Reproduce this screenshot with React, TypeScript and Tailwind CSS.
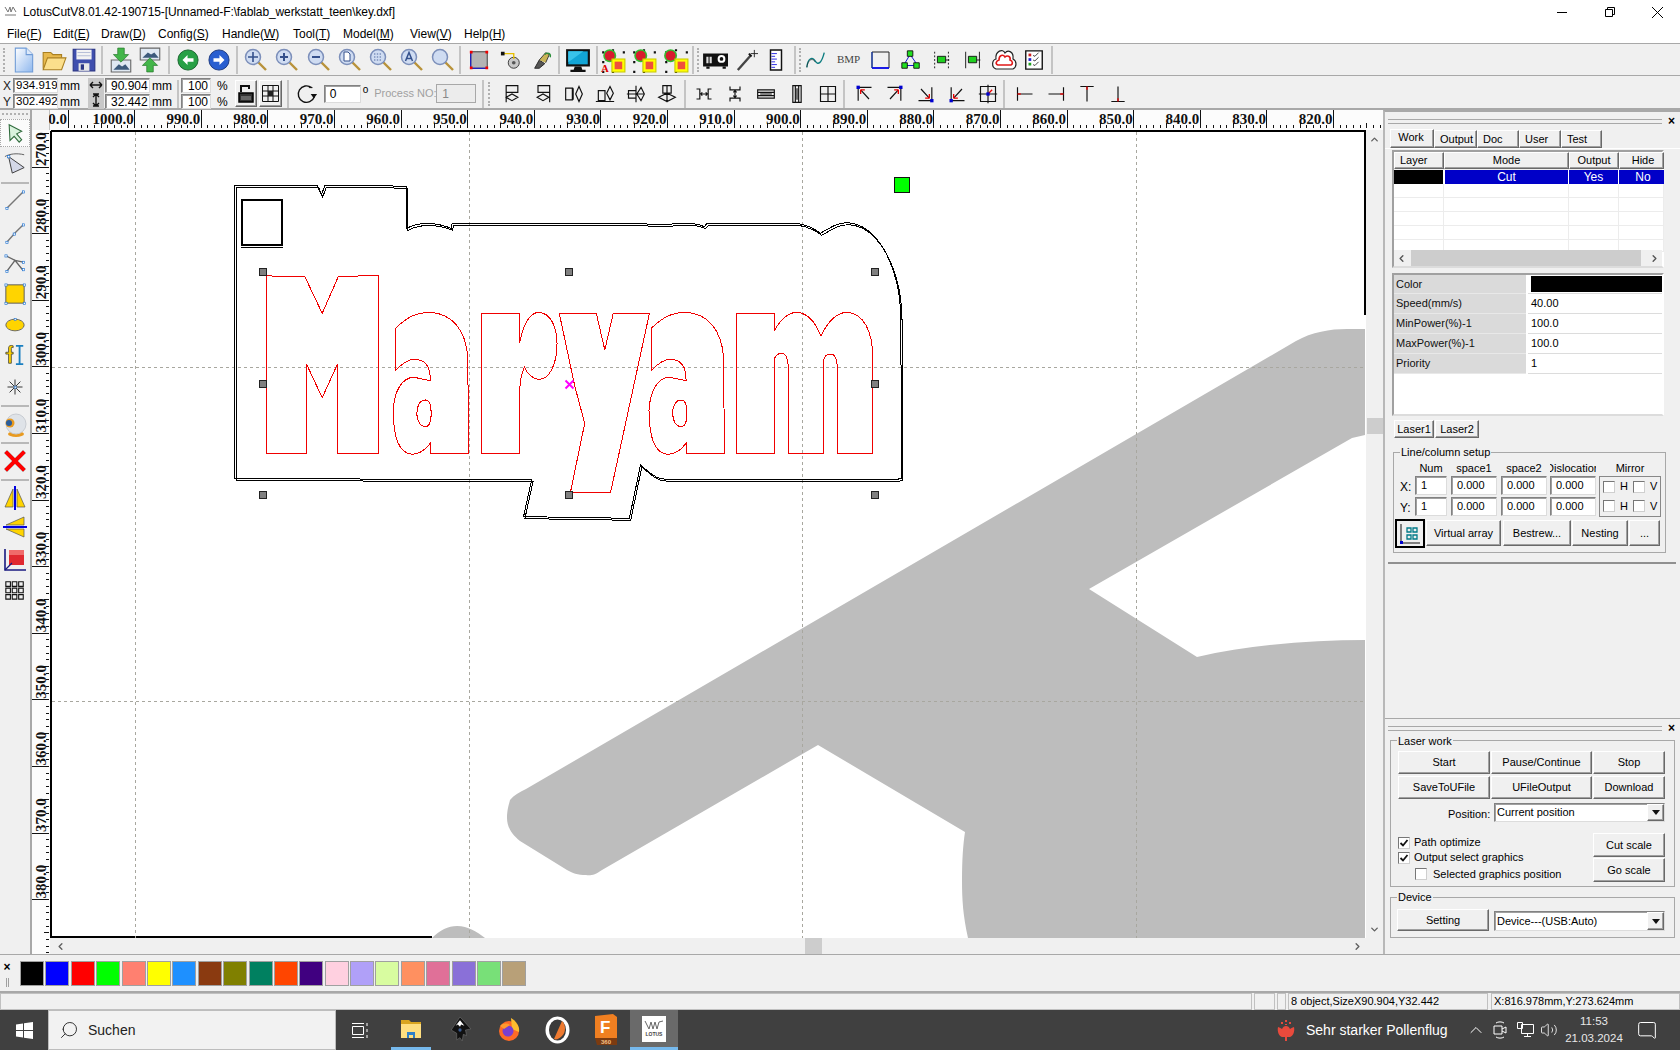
import { ReactNode } from "react";
import { ChevronDown, ChevronLeft, ChevronRight, ChevronUp, MessageSquare, Search, Volume2 } from "lucide-react";

const bevel =
  "bg-[#f0f0f0] border border-[#ffffff] border-r-[#696969] border-b-[#696969] shadow-[inset_-1px_-1px_0_#a0a0a0] flex items-center justify-center";
const sunken =
  "bg-white border border-[#828282] border-r-[#dcdcdc] border-b-[#dcdcdc] shadow-[inset_1px_1px_0_#a0a0a0] flex items-center overflow-hidden";

const Ico = ({ children, w = 24, h = 24 }: { children: ReactNode; w?: number; h?: number }) => (
  <svg width={w} height={h} viewBox="0 0 24 24" fill="none">
    {children}
  </svg>
);

const Slot = ({ w, children }: { w: string; children: ReactNode }) => (
  <div className={`${w} h-full shrink-0 flex items-center justify-center overflow-visible`}>{children}</div>
);

const Sep = ({ className = "" }: { className?: string }) => (
  <div className={`w-[2px] h-[28px] shrink-0 bg-[#c4c4c4] ${className}`} />
);

const Grip = ({ className = "" }: { className?: string }) => (
  <div className={`w-[3px] h-[24px] shrink-0 border-l-2 border-dotted border-[#b0b0b0] ${className}`} />
);

// ---- toolbar 1 icons
const NewIcon = () => (
  <Ico w={26} h={28}>
    <defs>
      <linearGradient id="pg" x1="0" y1="0" x2="1" y2="1">
        <stop offset="0" stopColor="#ffffff" />
        <stop offset="1" stopColor="#8fb8ee" />
      </linearGradient>
    </defs>
    <path d="M4 1h10l6 6v16H4z" fill="url(#pg)" stroke="#6f9bd6" />
    <path d="M14 1v6h6" fill="#dce9fa" stroke="#6f9bd6" />
  </Ico>
);
const OpenIcon = () => (
  <Ico w={26} h={26}>
    <path d="M2 20V5h7l2 2h8v3" fill="#e8b94c" stroke="#a97f20" />
    <path d="M2 21l4-11h17l-4 11z" fill="#fbdf8c" stroke="#a97f20" />
  </Ico>
);
const SaveIcon = () => (
  <Ico w={26} h={26}>
    <path d="M2 2h20v20H2z" fill="#3f4fae" stroke="#2a3585" />
    <path d="M5 2.5h14v9H5z" fill="#f3f3f3" />
    <path d="M6 5h12M6 8h12" stroke="#b8c0d8" />
    <path d="M7 15h10v7H7z" fill="#e8e8e8" />
    <path d="M9 16h3v5H9z" fill="#2a3585" />
  </Ico>
);
const ImportIcon = () => (
  <Ico w={26} h={28}>
    <path d="M3 12h18v11H3z" fill="#dfe8f2" stroke="#666" />
    <path d="M5 21l5-5 3 2 3-2 4 5z" fill="#3c5a7c" />
    <path d="M9 1h6v6h4l-7 7-7-7h4z" fill="#43b649" stroke="#2c7d31" strokeWidth="0.7" />
  </Ico>
);
const ExportIcon = () => (
  <Ico w={26} h={28}>
    <path d="M3 1h18v11H3z" fill="#dfe8f2" stroke="#666" />
    <path d="M5 10l5-5 3 2 3-2 4 5z" fill="#3c5a7c" />
    <path d="M12 10l7 7h-4v6H9v-6H5z" fill="#43b649" stroke="#2c7d31" strokeWidth="0.7" />
  </Ico>
);
const ArrowBall = ({ dir, a, b }: { dir: "l" | "r"; a: string; b: string }) => (
  <Ico w={22} h={22}>
    <circle cx="12" cy="12" r="11" fill={a} stroke={b} />
    <path d={dir === "l" ? "M6 12l5.5-5.5v3.5H18v4h-6.5v3.5z" : "M18 12l-5.5-5.5v3.5H6v4h6.5v3.5z"} fill="#fff" />
  </Ico>
);
const Glass = ({ g }: { g: string }) => (
  <Ico w={24} h={24}>
    <path d="M14 14l8 8" stroke="#b8923a" strokeWidth="2.4" />
    <circle cx="9" cy="9" r="7.5" fill="#cfdcf2" stroke="#7c8fba" strokeWidth="1.5" />
    {g === "move" && <path d="M9 4v10M4 9h10" stroke="#34508c" strokeWidth="1.6" />}
    {g === "plus" && <path d="M9 5v8M5 9h8" stroke="#34508c" strokeWidth="2" />}
    {g === "minus" && <path d="M5 9h8" stroke="#34508c" strokeWidth="2" />}
    {g === "page" && <path d="M6 4h4l2 2v7H6z" fill="#fff" stroke="#34508c" />}
    {g === "dots" && <path d="M5 6h8M5 9h8M5 12h8" stroke="#7c8fba" strokeWidth="1.4" strokeDasharray="1.4 1.4" />}
    {g === "A" && <path d="M5.5 13L9 4.5l3.5 8.5M7 10.5h4" stroke="#34508c" strokeWidth="1.5" />}
  </Ico>
);
const SelBox = () => (
  <Ico w={22} h={22}>
    <path d="M3 3h18v18H3z" fill="#b4b4b4" stroke="#333" />
    <path d="M3 3v18M3 21h18" stroke="#0000e0" />
    <path d="M2 2h3v3H2zM19 2h3v3h-3zM2 19h3v3H2zM19 19h3v3h-3z" fill="#f00000" />
  </Ico>
);
const Burn = () => (
  <Ico w={22} h={22}>
    <circle cx="15" cy="15" r="6" fill="#c8c8c8" stroke="#333" />
    <circle cx="15" cy="15" r="2" fill="#555" />
    <path d="M3 5h12v6" stroke="#e8c000" strokeWidth="1.5" />
    <path d="M1 3h4v4H1z" fill="#111" />
  </Ico>
);
const Brush = () => (
  <Ico w={22} h={22}>
    <path d="M4 21l5-9 6 4-6 5z" fill="#555" stroke="#222" />
    <path d="M9 12l7-8 4 2-4 9" fill="#c9b458" stroke="#333" />
    <path d="M15 6c3-3 7-1 6 3" stroke="#2a8f3a" strokeWidth="1.5" />
  </Ico>
);
const Monitor = () => (
  <Ico w={26} h={26}>
    <path d="M1 2h22v16H1z" fill="#111" />
    <path d="M3 4h18v12H3z" fill="#12a5d6" />
    <path d="M3 4h14L3 14z" fill="#38c3ea" />
    <path d="M9 18h6l1 3H8zM5 21h14v2H5z" fill="#111" />
  </Ico>
);
const Dots = () => (
  <path d="M2 4h2v2H2zM11 2h2v2h-2zM21 4h2v2h-2zM2 13h2v2H2zM11 22h2v2h-2zM2 22h2v2H2z" fill="#111" />
);
const Ball = ({ v }: { v: 0 | 1 | 2 }) => (
  <Ico w={26} h={26}>
    <Dots />
    <circle cx={v === 2 ? 7 : 9} cy="8" r="6" fill="#30c030" />
    <circle cx={v === 2 ? 7 : 9} cy="8" r="4.6" fill="#d81c2c" />
    <path d="M11 11h12v12H11z" fill="#ffff00" stroke="#c8c800" />
    <path d="M13.5 13.5h7v7h-7z" fill="#f0503c" />
    {v === 0 && (
      <text x="1" y="23" fontSize="10" fontWeight="700" fill="#e00000" fontFamily="Liberation Serif">
        A
      </text>
    )}
  </Ico>
);
const Projector = () => (
  <Ico w={30} h={26}>
    <path d="M1 6h23v12H1z" fill="#111" />
    <path d="M4 9h2v6H4zM7 9h2v6H7z" fill="#ddd" />
    <circle cx="18" cy="11" r="3.6" fill="#fff" />
    <circle cx="18" cy="11" r="1.7" fill="#111" />
    <path d="M4 18h3v2H4zM19 18h3v2h-3z" fill="#111" />
  </Ico>
);
const Wand = () => (
  <Ico w={24} h={24}>
    <path d="M2 23L16 7" stroke="#444" strokeWidth="2.6" />
    <path d="M14 5l3 3" stroke="#111" strokeWidth="2" />
    <path d="M20 1v8M16 5h8" stroke="#222" />
  </Ico>
);
const RulerIcon = () => (
  <Ico w={22} h={26}>
    <path d="M6 1h12v22H6z" fill="#fff" stroke="#111" strokeWidth="1.6" />
    <path d="M7 5h6M7 8h4M7 11h6M7 14h4M7 17h6M7 20h4" stroke="#2020e0" />
  </Ico>
);
const Curve = () => (
  <Ico w={22} h={22}>
    <path d="M2 20C3 10 8 8 11 13s7 3 10-9" stroke="#0d7d80" strokeWidth="1.5" />
    <path d="M2 20C3 12 8 9 11 14" stroke="#111" strokeWidth="0.6" />
  </Ico>
);
const Square = () => (
  <Ico w={24} h={24}>
    <path d="M4 4h17v16H4z" stroke="#222" />
    <path d="M4 20h17" stroke="#0000ff" strokeWidth="1.6" />
    <path d="M4 4v16" stroke="#0030c0" />
  </Ico>
);
const NodeTree = () => (
  <Ico w={22} h={22}>
    <path d="M11 6l-6 10M11 6l7 10M6 18h12" stroke="#0000d0" />
    <path d="M8 2h6v6H8zM2 15h6v6H2zM15 15h6v6h-6z" fill="#20e020" stroke="#111" />
  </Ico>
);
const SizeIcon = ({ v }: { v: 0 | 1 }) => (
  <Ico w={22} h={24}>
    <path d="M4 3v18M19 3v18" stroke="#111" strokeDasharray={v === 0 ? "2 2" : "0"} />
    <path d="M7 8h9v7H7z" fill="#20d020" stroke="#111" />
    <path d="M16 12h4" stroke="#111" />
  </Ico>
);
const Cloud = () => (
  <Ico w={26} h={24}>
    <path d="M4 21c-5-2-4-9 0-10C3 3 11 0 13 5c3-4 9-1 8 6 4 2 4 8 0 10z" fill="#fff" stroke="#222" strokeWidth="1.2" />
    <path d="M6 17c-3-1-2-4 1-5 0-5 4-6 6-3 2-2 6-1 5 3 3 1 3 4 1 5z" fill="#fff" stroke="#e01818" strokeWidth="1.6" />
  </Ico>
);
const CheckList = () => (
  <Ico w={22} h={24}>
    <path d="M3 2h18v20H3z" fill="#fff" stroke="#111" strokeWidth="1.5" />
    <path d="M6 5h3v3H6z" fill="#d02020" />
    <path d="M6 10h3v3H6z" fill="#2020d0" />
    <path d="M6 15h3v3H6z" fill="#20a020" />
    <path d="M11 7l2 1 4-4M11 12l2 1 4-4M11 17l2 1 4-4" stroke="#333" />
  </Ico>
);

// ---- toolbar 2 icons
const Al = ({ d, red }: { d: string; red?: string }) => (
  <Ico w={20} h={20}>
    <path d={d} stroke="#111" strokeWidth="1.4" fill="none" />
    {red && <path d={red} stroke="#f00000" strokeWidth="1.6" fill="none" />}
  </Ico>
);
const Corner = ({ d, red, sq }: { d: string; red: string; sq: string }) => (
  <Ico w={20} h={20}>
    <path d={d} stroke="#111" strokeWidth="1.4" />
    <path d={red} stroke="#f00000" strokeWidth="1.6" />
    <path d={sq} fill="#0000d0" />
  </Ico>
);

const tb2align = [
  "M5 2h14v8H5zM5 10v12M5 16l7-4 7 4-7 4z",
  "M6 2h14v8H6zM20 10v12M5 16l7-4 7 4-7 4z",
  "M2 5h8v14H2zM2 5h9M11 5v14M18 3l4 9-4 9-4-9z",
  "M4 8h8v12H4zM1 21h22M18 3l4 8-4 8-4-8z",
  "M3 8h9v9H3zM12 2v20M18 4l4 8-4 8-5-8zM1 12h20",
  "M7 2h10v9H7zM12 2v20M2 16l10-5 10 5-10 5z",
];
const tb2size = [
  "M3 6h4v12H3M21 6h-4v12h4M8 12h8M8 12l2-2M8 12l2 2M16 12l-2-2M16 12l-2 2",
  "M6 3v4h12V3M6 21v-4h12v4M12 8v8M12 8l-2 2M12 8l2 2M12 16l-2-2M12 16l2-2",
  "M2 7h20v10H2zM2 10h20M2 14h20M5 12h14",
  "M7 2h10v20H7zM10 2v20M14 2v20M12 5v14",
  "M3 3h18v18H3zM12 3v18M3 12h18M8 12h8M12 8v8",
];

// ---- left bar
const Node = ({ x, y }: { x: number; y: number }) => <rect x={x - 1} y={y - 1} width="2.4" height="2.4" fill="#fff" stroke="#1a6fd0" strokeWidth="0.7" />;
const LeftIcons: { key: string; h: string; el?: ReactNode; sep?: boolean }[] = [
  {
    key: "arrow",
    h: "h-[30px]",
    el: (
      <div className="w-[30px] h-[28px] bg-[#fbfbfb] border border-dotted border-[#a8a8a8] flex items-center justify-center">
        <Ico w={20} h={22}>
          <path d="M5 2l15 8-6 3 6 7-3 3-6-7-5 5z" fill="#d9f2dd" stroke="#2f6b3c" strokeWidth="1.3" />
        </Ico>
      </div>
    ),
  },
  {
    key: "node",
    h: "h-[24px] mt-[3px]",
    el: (
      <Ico w={22} h={22}>
        <path d="M1 5C6 2 14 1 22 3" stroke="#555" />
        <path d="M5 5l17 12-13 6z" fill="#d4d8e8" stroke="#333" />
        <Node x={5} y={5} />
      </Ico>
    ),
  },
  { key: "s1", h: "h-[2px] mt-[7px]", sep: true },
  {
    key: "line",
    h: "h-[24px] mt-[4px]",
    el: (
      <Ico w={22} h={22}>
        <path d="M3 21L21 3" stroke="#777" strokeWidth="1.5" />
        <Node x={3} y={21} />
        <Node x={21} y={3} />
      </Ico>
    ),
  },
  {
    key: "poly",
    h: "h-[24px] mt-[9px]",
    el: (
      <Ico w={22} h={22}>
        <path d="M3 22L13 11 21 3" stroke="#777" strokeWidth="1.5" />
        <Node x={3} y={22} />
        <Node x={11} y={13} />
        <Node x={21} y={3} />
      </Ico>
    ),
  },
  {
    key: "bez",
    h: "h-[24px] mt-[7px]",
    el: (
      <Ico w={24} h={22}>
        <path d="M3 20L12 8l8 10M2 3l10 5 9 2" stroke="#666" strokeWidth="1.5" />
        <Node x={3} y={20} />
        <Node x={2} y={3} />
        <Node x={21} y={10} />
        <Node x={21} y={18} />
      </Ico>
    ),
  },
  {
    key: "rect",
    h: "h-[24px] mt-[6px]",
    el: (
      <Ico w={22} h={22}>
        <path d="M2 2h20v20H2z" fill="#ffd400" stroke="#555" />
        <Node x={2} y={2} />
        <Node x={22} y={2} />
        <Node x={2} y={22} />
        <Node x={22} y={22} />
      </Ico>
    ),
  },
  {
    key: "ellipse",
    h: "h-[24px] mt-[7px]",
    el: (
      <Ico w={24} h={20}>
        <ellipse cx="12" cy="12" rx="11" ry="7" fill="#ffd400" stroke="#555" />
        <Node x={12} y={5} />
      </Ico>
    ),
  },
  {
    key: "text",
    h: "h-[24px] mt-[6px]",
    el: (
      <Ico w={22} h={24}>
        <path d="M2 9h3V4c0-2 2-3 5-2v2c-2-1-2 0-2 1v4h2v2H8v10H5V11H2z" fill="#ffd400" stroke="#333" strokeWidth="0.8" />
        <path d="M13 2h8M13 22h8M17 2v20" stroke="#1a7fc0" strokeWidth="2" />
      </Ico>
    ),
  },
  {
    key: "star",
    h: "h-[24px] mt-[8px]",
    el: (
      <Ico w={20} h={20}>
        <path d="M12 3v18M3 12h18M5.5 5.5l13 13M18.5 5.5l-13 13" stroke="#111" />
        <Node x={12} y={12} />
      </Ico>
    ),
  },
  { key: "s2", h: "h-[2px] mt-[6px]", sep: true },
  {
    key: "cam",
    h: "h-[24px] mt-[6px]",
    el: (
      <Ico w={24} h={26}>
        <ellipse cx="13" cy="21" rx="8" ry="3" fill="#e89a20" />
        <circle cx="13" cy="11" r="10" fill="#dfe3e8" stroke="#c8ccd2" />
        <circle cx="7" cy="10" r="4.5" fill="#e89a20" />
        <circle cx="6" cy="10" r="3" fill="#2a5d9c" />
      </Ico>
    ),
  },
  { key: "s3", h: "h-[2px] mt-[5px]", sep: true },
  {
    key: "x",
    h: "h-[24px] mt-[5px]",
    el: (
      <Ico w={24} h={24}>
        <path d="M1 4l3-3 8 8 8-8 3 3-8 8 8 8-3 3-8-8-8 8-3-3 8-8z" fill="#ff0000" stroke="#b8b8b8" strokeWidth="0.7" />
      </Ico>
    ),
  },
  { key: "s4", h: "h-[2px] mt-[6px]", sep: true },
  {
    key: "mirrorh",
    h: "h-[24px] mt-[5px]",
    el: (
      <Ico w={24} h={24}>
        <path d="M10 3v18H2zM14 3v18h8z" fill="#ffd400" stroke="#555" strokeWidth="0.7" />
        <path d="M12 0v24" stroke="#0000e0" strokeWidth="2" />
      </Ico>
    ),
  },
  {
    key: "mirrorv",
    h: "h-[24px] mt-[5px]",
    el: (
      <Ico w={24} h={24}>
        <path d="M21 10H3l18-8zM21 14H3l18 8z" fill="#ffd400" stroke="#555" strokeWidth="0.7" />
        <path d="M0 12h24" stroke="#0000e0" strokeWidth="2" />
      </Ico>
    ),
  },
  {
    key: "origin",
    h: "h-[24px] mt-[9px]",
    el: (
      <Ico w={24} h={24}>
        <path d="M6 2h15v15H6z" fill="#e02830" />
        <path d="M6 2h15v5H6z" fill="#f06a6a" />
        <path d="M2 1v21h21" stroke="#1a1a80" strokeWidth="1.6" />
        <path d="M2 22L9 15" stroke="#1a1a80" strokeWidth="1.2" />
      </Ico>
    ),
  },
  {
    key: "gridbtn",
    h: "h-[24px] mt-[6px]",
    el: (
      <Ico w={22} h={22}>
        <path d="M2 3h5v5H2zM9 3h5v5H9zM16 3h5v5h-5zM2 10h5v5H2zM9 10h5v5H9zM16 10h5v5h-5zM2 17h5v5H2zM9 17h5v5H9zM16 17h5v5h-5z" stroke="#111" strokeWidth="1.2" />
      </Ico>
    ),
  },
];

// ---- rulers
const hVals = Array.from({ length: 20 }, (_, i) => 1010 - i * 10);
const vVals = Array.from({ length: 12 }, (_, i) => 270 + i * 10);
const tickX = (v: number) => 135.7 + (1000 - v) * 6.66;
const tickY = (v: number) => 167 + (v - 270) * 6.66;

const HRuler = () => (
  <svg width="1333" height="20" viewBox="50 111 1333 20" className="block" shapeRendering="crispEdges">
    {Array.from({ length: 200 }, (_, i) => {
      const x = 69 + i * 6.66;
      const big = i % 10 === 0;
      const mid = i % 5 === 0;
      return <line key={i} x1={x} x2={x} y1={big ? 111 : mid ? 124 : 126} y2={129} stroke="#111" />;
    })}
    {hVals.map((v) => (
      <text key={v} x={tickX(v) - 1} y={125} textAnchor="end" fontFamily="Liberation Serif" fontWeight="700" fontSize="15" fill="#111" shapeRendering="auto">
        {v}.0
      </text>
    ))}
  </svg>
);

const VRuler = () => (
  <svg width="18" height="825" viewBox="32 130 18 825" className="block" shapeRendering="crispEdges">
    {Array.from({ length: 130 }, (_, i) => {
      const y = 100.4 + i * 6.66;
      const big = i % 10 === 0;
      const mid = i % 5 === 0;
      return <line key={i} x1={big ? 32 : mid ? 44 : 46} x2={49} y1={y} y2={y} stroke="#111" />;
    })}
    {vVals.map((v) => (
      <text key={v} x={46} y={tickY(v) - 1} textAnchor="start" transform={`rotate(-90 46 ${tickY(v) - 1})`} fontFamily="Liberation Serif" fontWeight="700" fontSize="15" fill="#111" shapeRendering="auto" dominantBaseline="auto">
        {v}.0
      </text>
    ))}
  </svg>
);

// ---- drawing
const outline =
  "M33 47L218 47 227 75 235 47 372 47 418 50 418 175C440 160 470 150 518 175L520 160 925 160 1000 165C1020 158 1060 155 1085 170L1090 162 1260 160C1280 158 1310 155 1345 190C1370 170 1385 158 1405 158C1450 160 1490 220 1510 310C1520 350 1525 400 1525 450L1527 925 1510 930 1010 930 985 925C970 920 955 900 942 885L917 1045 680 1040 698 930 33 925Z";
const aShape =
  "M393 475C420 440 440 428 470 427C520 430 550 480 555 560L557 850L471 850L471 820C460 840 445 853 430 853C400 850 388 800 388 720C390 670 405 622 435 622L471 632C472 590 460 568 435 568C420 568 405 585 393 602ZM460 690C445 690 441 715 441 730C441 755 450 770 460 770C470 770 473 755 473 730C473 705 470 690 460 690Z";
const letters = [
  "M104 316L128 320 190 320 229 430 265 320 355 316 355 850 263 850 263 583 229 683 194 583 194 850 104 850Z",
  "M585 430L671 430 671 520C680 460 695 427 715 427C740 430 755 470 755 520C755 590 735 630 713 628C700 627 688 610 682 592C675 610 671 650 671 680L671 850 585 850Z",
  "M760 430L843 430 862 540 881 430 962 430 875 967 785 967 817 760 795 650Z",
  "M1158 430L1242 430 1242 482C1255 450 1270 427 1293 427C1320 430 1335 460 1346 498C1360 460 1380 427 1405 427C1440 430 1462 480 1462 560L1462 850 1383 850 1383 600C1383 570 1378 552 1367 552C1356 552 1352 565 1352 580L1352 850 1273 850 1273 600C1273 570 1268 550 1258 550C1248 550 1242 562 1242 570L1242 850 1158 850Z",
];
const handles = [
  [263, 272],
  [569, 272],
  [875, 272],
  [263, 384],
  [875, 384],
  [263, 495],
  [569, 495],
  [875, 495],
];

const Drawing = () => (
  <svg width="1316" height="808" viewBox="50 130 1316 808" className="block">
    <path
      d="M526 789L1296 341C1312 332 1330 329 1347 329L1365 329 1365 435 1352 438 1089 589 1197 657C1250 645 1310 640 1365 640L1365 938 968 938C963 915 962 900 962 880C962 860 963 845 965 832L818 745 602 870C595 875 590 876 586 875C578 875 572 873 567 870L520 841C512 835 507 827 507 818C507 810 509 804 510 800C514 795 520 792 526 789Z"
      fill="#bdbdbd"
    />
    <path d="M432 938C440 930 448 926 457 926C468 926 477 932 485 938Z" fill="#bdbdbd" />
    <path d="M51 131H1365V315M51 131V937H432" stroke="#000" strokeWidth="2" fill="none" shapeRendering="crispEdges" />
    <g stroke="#a8a79f" strokeDasharray="3 3" shapeRendering="crispEdges">
      {[135.5, 469.5, 802.5, 1136.5].map((x) => (
        <line key={x} x1={x} x2={x} y1={132} y2={938} />
      ))}
      {[367.5, 701.5].map((y) => (
        <line key={y} x1={52} x2={1366} y1={y} y2={y} />
      ))}
    </g>
    <g transform="translate(220 170) scale(0.4464 0.3333)" fill="none" shapeRendering="crispEdges">
      <path d={outline} stroke="#000" strokeWidth="1" vectorEffect="non-scaling-stroke" />
      <path d={outline} transform="translate(3 6)" stroke="#000" strokeWidth="1" vectorEffect="non-scaling-stroke" />
      {letters.map((d) => (
        <path key={d} d={d} stroke="#f00000" strokeWidth="1" vectorEffect="non-scaling-stroke" />
      ))}
      <path d={aShape} stroke="#f00000" strokeWidth="1" vectorEffect="non-scaling-stroke" />
      <path d={aShape} transform="translate(573 0)" stroke="#f00000" strokeWidth="1" vectorEffect="non-scaling-stroke" />
    </g>
    <rect x="242" y="200" width="40" height="45" fill="none" stroke="#000" strokeWidth="2" shapeRendering="crispEdges" />
    <line x1="241" x2="283" y1="247.5" y2="247.5" stroke="#000" shapeRendering="crispEdges" />
    {handles.map(([x, y]) => (
      <rect key={`${x}-${y}`} x={x - 3.5} y={y - 3.5} width="7" height="7" fill="#808080" stroke="#222" shapeRendering="crispEdges" />
    ))}
    <path d="M565.5 380.5l8 8M573.5 380.5l-8 8" stroke="#ff00ff" strokeWidth="2" />
    <rect x="894.5" y="177.5" width="15" height="15" fill="#00ff00" stroke="#111" shapeRendering="crispEdges" />
  </svg>
);

const palette = ["#000000", "#0000ff", "#ff0000", "#00ff00", "#ff8070", "#ffff00", "#1e90ff", "#8a3a10", "#808000", "#008060", "#ff4500", "#400080", "#ffd0e0", "#b0a0f8", "#d8fca0", "#ff9060", "#e07098", "#8a70d8", "#78e078", "#b8a078"];

const PanelGrip = () => (
  <div className="h-[18px] shrink-0 flex items-center pl-[3px] pr-[4px]">
    <div className="w-[274px] h-[5px] border-y border-[#a8a8a8]" />
    <span className="ml-[6px] text-[12px] font-bold leading-none">×</span>
  </div>
);

const Chk = ({ on, className = "" }: { on?: boolean; className?: string }) => (
  <div className={`w-[12px] h-[12px] shrink-0 bg-white border border-[#777] border-r-[#cfcfcf] border-b-[#cfcfcf] flex items-center justify-center ${className}`}>
    {on && (
      <svg width="10" height="10" viewBox="0 0 10 10">
        <path d="M1.5 5l2.5 2.5 4.5-5.5" stroke="#111" strokeWidth="1.8" fill="none" />
      </svg>
    )}
  </div>
);

const Combo = ({ text, className }: { text: string; className: string }) => (
  <div className={`${sunken} pl-[2px] ${className}`}>
    <span className="flex-1">{text}</span>
    <div className={`${bevel} w-[17px] h-full`}>
      <svg width="8" height="5" viewBox="0 0 8 5">
        <path d="M0 0h8L4 5z" fill="#111" />
      </svg>
    </div>
  </div>
);

const Menu = ({ t, k, w }: { t: string; k: string; w: string }) => (
  <span className={`${w} shrink-0`}>
    {t}(<span className="underline">{k}</span>)
  </span>
);

export default function App() {
  return (
    <div className="w-[1680px] h-[1050px] overflow-hidden flex flex-col bg-[#f0f0f0] text-black text-[11px] leading-none font-['Liberation_Sans',sans-serif]">
      {/* title */}
      <div className="h-[24px] shrink-0 bg-white flex items-center text-[12px]">
        <div className="w-[23px] pl-[3px] shrink-0">
          <svg width="15" height="12" viewBox="0 0 15 12">
            <path d="M2 1l3 5 2-5 1 5 2-5 3 5M2 9h11" stroke="#777" fill="none" />
          </svg>
        </div>
        <span className="tracking-[-0.1px]">LotusCutV8.01.42-190715-[Unnamed-F:\fablab_werkstatt_teen\key.dxf]</span>
        <div className="ml-auto flex h-full">
          <div className="w-[48px] flex items-center justify-center">
            <div className="w-[10px] h-px bg-black" />
          </div>
          <div className="w-[48px] flex items-center justify-center">
            <svg width="10" height="10" viewBox="0 0 10 10">
              <path d="M.5 2.5h7v7h-7zM2.5 2.5v-2h7v7h-2" fill="none" stroke="#000" />
            </svg>
          </div>
          <div className="w-[46px] flex items-center justify-center">
            <svg width="11" height="11" viewBox="0 0 11 11">
              <path d="M0 0l11 11M11 0L0 11" stroke="#000" />
            </svg>
          </div>
        </div>
      </div>
      {/* menu */}
      <div className="h-[20px] shrink-0 bg-white border-b border-[#a8a8a8] flex items-center pl-[7px] text-[12px]">
        <Menu t="File" k="F" w="w-[46px]" />
        <Menu t="Edit" k="E" w="w-[48px]" />
        <Menu t="Draw" k="D" w="w-[57px]" />
        <Menu t="Config" k="S" w="w-[64px]" />
        <Menu t="Handle" k="W" w="w-[71px]" />
        <Menu t="Tool" k="T" w="w-[50px]" />
        <Menu t="Model" k="M" w="w-[67px]" />
        <Menu t="View" k="V" w="w-[54px]" />
        <Menu t="Help" k="H" w="w-[54px]" />
      </div>
      {/* toolbar 1 */}
      <div className="h-[32px] shrink-0 flex items-center pl-[3px] border-b border-[#a8a8a8]">
        <Grip className="mr-[2px]" />
        <Slot w="w-[31px]"><NewIcon /></Slot>
        <Slot w="w-[30px]"><OpenIcon /></Slot>
        <Slot w="w-[30px]"><SaveIcon /></Slot>
        <Sep className="ml-[2px] mr-[4px]" />
        <Slot w="w-[28px]"><ImportIcon /></Slot>
        <Slot w="w-[29px]"><ExportIcon /></Slot>
        <Sep className="ml-[4px] mr-[2px]" />
        <Slot w="w-[31px]"><ArrowBall dir="l" a="#27a045" b="#14602a" /></Slot>
        <Slot w="w-[31px]"><ArrowBall dir="r" a="#2a5fd0" b="#18357c" /></Slot>
        <Sep className="ml-[2px] mr-[2px]" />
        <Slot w="w-[31.5px]"><Glass g="move" /></Slot>
        <Slot w="w-[31.5px]"><Glass g="plus" /></Slot>
        <Slot w="w-[31.5px]"><Glass g="minus" /></Slot>
        <Slot w="w-[31px]"><Glass g="page" /></Slot>
        <Slot w="w-[31px]"><Glass g="dots" /></Slot>
        <Slot w="w-[31px]"><Glass g="A" /></Slot>
        <Slot w="w-[31px]"><Glass g="none" /></Slot>
        <Sep className="mr-[2px]" />
        <Slot w="w-[32px]"><SelBox /></Slot>
        <Slot w="w-[32px]"><Burn /></Slot>
        <Slot w="w-[30px]"><Brush /></Slot>
        <Sep className="ml-px" />
        <Slot w="w-[36px]"><Monitor /></Slot>
        <Sep />
        <Slot w="w-[31px]"><Ball v={0} /></Slot>
        <Slot w="w-[31px]"><Ball v={1} /></Slot>
        <Slot w="w-[32px]"><Ball v={2} /></Slot>
        <Sep />
        <Grip className="ml-[3px] -mr-[6px]" />
        <Slot w="w-[42px]"><Projector /></Slot>
        <Slot w="w-[22px]"><Wand /></Slot>
        <Slot w="w-[36px]"><RulerIcon /></Slot>
        <Sep />
        <Grip className="ml-[3px] -mr-[6px]" />
        <Slot w="w-[40px]"><Curve /></Slot>
        <Slot w="w-[26px]">
          <span className="text-[11px] text-[#444] font-['Liberation_Serif',serif]">BMP</span>
        </Slot>
        <Slot w="w-[36px]"><Square /></Slot>
        <Slot w="w-[26px]"><NodeTree /></Slot>
        <Slot w="w-[36px]"><SizeIcon v={0} /></Slot>
        <Slot w="w-[26px]"><SizeIcon v={1} /></Slot>
        <Slot w="w-[36px]"><Cloud /></Slot>
        <Slot w="w-[24px]"><CheckList /></Slot>
        <Sep className="ml-[5px]" />
      </div>
      {/* toolbar 2 */}
      <div className="h-[34px] shrink-0 flex items-center pt-[3px] border-b-2 border-[#a8a8a8]">
        <div className="w-[172px] shrink-0 flex pl-[3px]">
          <div className="flex flex-col gap-px text-[12px]">
            {[["X", "934.919", "mm"], ["Y", "302.492", "mm"]].map(([l, v, u]) => (
              <div key={l} className="flex items-center h-[15px]">
                <span className="w-[10px] text-[#222]">{l}</span>
                <div className={`${sunken} w-[45px] h-[15px] pl-[2px] text-[11.5px]`}>
                  <span className="whitespace-nowrap">{v}</span>
                </div>
                <span className="ml-[2px]">{u}</span>
              </div>
            ))}
          </div>
          <div className="ml-[8px] w-[19px] bg-[#c8c8c8] flex flex-col items-center justify-around text-[14px] font-bold">
            <svg width="14" height="10" viewBox="0 0 14 10">
              <path d="M1 5h12M1 5l3-3M1 5l3 3M13 5l-3-3M13 5l-3 3" stroke="#111" strokeWidth="1.4" fill="none" />
            </svg>
            <svg width="10" height="14" viewBox="0 0 10 14">
              <path d="M5 1v12M5 1L2 4M5 1l3 3M5 13l-3-3M5 13l3-3M2 1h6M2 13h6" stroke="#111" strokeWidth="1.4" fill="none" />
            </svg>
          </div>
          <div className="ml-px flex flex-col gap-px text-[12px]">
            {["90.904", "32.442"].map((v) => (
              <div key={v} className="flex items-center h-[15px]">
                <div className={`${sunken} w-[45px] h-[15px] pl-[5px]`}>{v}</div>
                <span className="ml-[2px]">mm</span>
              </div>
            ))}
          </div>
        </div>
        <Sep className="ml-[5px] mr-[2px]" />
        <div className="flex flex-col gap-px text-[12px]">
          {["r1", "r2"].map((r) => (
            <div key={r} className="flex items-center h-[15px]">
              <div className={`${sunken} w-[30px] h-[15px] pl-[6px]`}>100</div>
              <span className="ml-[6px]">%</span>
            </div>
          ))}
        </div>
        <div className={`${bevel} ml-[7px] w-[22px] h-[27px]`}>
          <svg width="16" height="21" viewBox="0 0 16 21">
            <path d="M3 9V3h8v3" stroke="#111" strokeWidth="2" fill="none" />
            <path d="M1 10h14v9H1z" fill="#333" stroke="#000" strokeWidth="1.5" />
            <path d="M3 13h10v4H3z" fill="#666" />
          </svg>
        </div>
        <div className={`${bevel} ml-[2px] w-[23px] h-[27px]`}>
          <svg width="17" height="17" viewBox="0 0 17 17">
            <path d="M.5.5h16v16H.5zM6 .5v16M11 .5v16M.5 6h16M.5 11h16" stroke="#111" fill="none" />
            <path d="M6 6h5v5H6z" fill="#222" />
          </svg>
        </div>
        <Sep className="ml-[5px] mr-[6px]" />
        <svg width="24" height="22" viewBox="0 0 24 24" fill="none">
          <path d="M20 15a9 9 0 1 1-3-10" stroke="#111" strokeWidth="1.5" />
          <path d="M16 12h7l-3.5 5z" fill="#111" />
          <path d="M14 5h4" stroke="#111" />
        </svg>
        <div className={`${sunken} ml-[5px] w-[37px] h-[18px] pl-[5px] text-[12px]`}>0</div>
        <span className="ml-[2px] mr-[6px] -mt-[8px] text-[10px]">o</span>
        <span className="text-[#a0a0a0] text-[11px] whitespace-nowrap w-[60px]">Process NO:</span>
        <div className="w-[40px] h-[19px] ml-[2px] border border-[#a8a8a8] bg-[#ececec] flex items-center pl-[5px] text-[#888] text-[12px]">1</div>
        <Sep className="ml-[6px]" />
        <Grip className="ml-[4px]" />
        <div className="flex h-full ml-[5px]">
          {tb2align.map((d) => (
            <Slot key={d} w="w-[31px]"><Al d={d} /></Slot>
          ))}
        </div>
        <Sep className="ml-[2px] mr-[2px]" />
        {tb2size.map((d) => (
          <Slot key={d} w="w-[31px]"><Al d={d} /></Slot>
        ))}
        <Sep className="mr-[3px]" />
        <Slot w="w-[31px]"><Corner d="M5 20V4h16M8 7l10 11" red="M8 7h5M8 7v5" sq="M3 2h4v4H3z" /></Slot>
        <Slot w="w-[31px]"><Corner d="M19 20V4H3M16 7L6 18" red="M16 7h-5M16 7v5" sq="M17 2h4v4h-4z" /></Slot>
        <Slot w="w-[31px]"><Corner d="M19 4v16H3M6 6l10 11" red="M16 17h-5M16 17v-5" sq="M17 18h4v4h-4z" /></Slot>
        <Slot w="w-[31px]"><Corner d="M5 4v16h16M18 6L8 17" red="M8 17h5M8 17v-5" sq="M3 18h4v4H3z" /></Slot>
        <Slot w="w-[31px]"><Corner d="M3 3h18v18H3zM12 1v22M1 12h22" red="M12 12l5-5" sq="M10 10h4v4h-4z" /></Slot>
        <Sep className="mr-[4px]" />
        <Slot w="w-[31px]"><Al d="M3 4v16M21 12H3" red="M3 12h4" /></Slot>
        <Slot w="w-[31px]"><Al d="M21 4v16M3 12h18" red="M21 12h-4" /></Slot>
        <Slot w="w-[31px]"><Al d="M4 3h16M12 21V3" red="M12 3v4" /></Slot>
        <Slot w="w-[31px]"><Al d="M4 21h16M12 3v18" red="M12 21v-4" /></Slot>
      </div>

      {/* main */}
      <div className="h-[845px] shrink-0 flex border-b border-[#a8a8a8]">
        <div className="w-[1383px] shrink-0 flex">
          <div className="w-[32px] shrink-0 border-r-2 border-[#a8a8a8] flex flex-col items-center">
            <div className="h-[8px] w-[26px] shrink-0 border-t-2 border-dotted border-[#b0b0b0] mt-[3px] -mb-[3px]" />
            {LeftIcons.map((i) =>
              i.sep ? (
                <div key={i.key} className={`${i.h} w-[28px] shrink-0 bg-[#b8b8b8]`} />
              ) : (
                <div key={i.key} className={`${i.h} shrink-0 flex items-center justify-center`}>
                  {i.el}
                </div>
              )
            )}
          </div>
          <div className="flex-1 flex flex-col">
            <div className="h-[20px] shrink-0 flex bg-[#fcfcfc]">
              <div className="w-[18px] shrink-0 bg-[#f4f4f4] border-r border-[#c0c0c0]" />
              <div className="overflow-hidden -ml-px">
                <HRuler />
              </div>
            </div>
            <div className="flex-1 flex min-h-0">
              <div className="w-[18px] shrink-0 bg-[#fcfcfc] overflow-hidden">
                <VRuler />
              </div>
              <div className="flex-1 flex flex-col min-w-0">
                <div className="flex h-[808px] shrink-0">
                  <div className="w-[1316px] shrink-0 bg-white overflow-hidden">
                    <Drawing />
                  </div>
                  <div className="w-[17px] shrink-0 flex flex-col items-center text-[#606060]">
                    <ChevronUp size={11} strokeWidth={3} className="mt-[4px]" />
                    <div className="w-[16px] h-[16px] bg-[#cdcdcd] mt-[273px]" />
                    <ChevronDown size={11} strokeWidth={3} className="mt-auto mb-[3px]" />
                  </div>
                </div>
                <div className="flex-1 flex items-center text-[#606060]">
                  <ChevronLeft size={11} strokeWidth={3} className="ml-[5px]" />
                  <div className="w-[17px] h-[16px] bg-[#cdcdcd] ml-[739px]" />
                  <ChevronRight size={11} strokeWidth={3} className="ml-[530px]" />
                </div>
              </div>
            </div>
          </div>
        </div>

        {/* right panels */}
        <div className="flex-1 flex flex-col border-l-2 border-[#b8b8b8] border-t-2 border-t-[#a8a8a8]">
          <div className="h-[606px] shrink-0 flex flex-col">
            <PanelGrip />
            <div className="h-[19px] shrink-0 flex items-end pl-[5px] border-b border-white">
              <div className={`${bevel} w-[44px] h-[19px] pr-[2px] pb-[3px]`}>Work</div>
              {[["Output", "w-[43px]"], ["Doc", "w-[42px]"], ["User", "w-[42px]"], ["Test", "w-[41px]"]].map(([t, w]) => (
                <div key={t} className={`${bevel} ${w} h-[18px] justify-start! pl-[5px]`}>
                  {t}
                </div>
              ))}
            </div>
            <div className="ml-[7px] mt-px w-[272px] h-[118px] shrink-0 border-2 border-[#a0a0a0] border-r-white border-b-[#dcdcdc] bg-white flex flex-col">
              <div className="grid grid-cols-[50px_125px_50px_45px] h-[18px] shrink-0 bg-[#f0f0f0]">
                {["Layer", "Mode", "Output", "Hide"].map((h) => (
                  <div key={h} className={`${bevel} h-[17px] ${h === "Layer" ? "justify-start! pl-[5px]" : ""} ${h === "Hide" ? "pl-[3px]" : ""}`}>
                    {h}
                  </div>
                ))}
              </div>
              <div className="grid grid-cols-[50px_125px_50px_45px] h-[14px] shrink-0 text-white">
                <div className="bg-black mr-px" />
                <div className="bg-[#0000c8] ml-px mr-px flex items-center justify-center text-[12px]">Cut</div>
                <div className="bg-[#0000c8] flex items-center justify-center text-[12px] mr-px">Yes</div>
                <div className="bg-[#0000c8] flex items-center justify-center text-[12px] pl-[3px]">No</div>
              </div>
              <div className="flex-1 grid grid-cols-[50px_125px_50px_45px] grid-rows-[14px_14px_14px_14px_12px] min-h-0">
                {Array.from({ length: 20 }, (_, i) => (
                  <div key={i} className="border-r border-b border-[#ececec]" />
                ))}
              </div>
              <div className="h-[16px] shrink-0 bg-[#f0f0f0] flex items-center text-[#555]">
                <ChevronLeft size={11} strokeWidth={3} className="ml-[2px]" />
                <div className="w-[230px] h-full bg-[#cdcdcd] ml-[4px]" />
                <ChevronRight size={11} strokeWidth={3} className="ml-[8px]" />
              </div>
            </div>
            <div className="ml-[7px] mt-[5px] w-[272px] h-[143px] shrink-0 border-2 border-[#a0a0a0] border-r-white border-b-[#dcdcdc] bg-white">
              {[["Color", ""], ["Speed(mm/s)", "40.00"], ["MinPower(%)-1", "100.0"], ["MaxPower(%)-1", "100.0"], ["Priority", "1"]].map(([l, v]) => (
                <div key={l} className={`flex ${l === "Color" ? "h-[19px]" : "h-[20px]"}`}>
                  <div className="w-[132px] bg-[#dadada] flex items-center pl-[2px] text-[#111] border-b border-[#e8e8e8]">{l}</div>
                  <div className="w-[134px] ml-[2px] border-b border-[#dcdcdc] flex items-center pl-[3px]">
                    {l === "Color" ? <div className="w-[132px] h-[16px] bg-black" /> : v}
                  </div>
                </div>
              ))}
            </div>
            <div className="ml-[9px] mt-[4px] h-[18px] shrink-0 flex">
              <div className={`${bevel} w-[40px]`}>Laser1</div>
              <div className={`${bevel} w-[44px] ml-px`}>Laser2</div>
            </div>
            <div className="relative ml-[8px] mt-[14px] w-[273px] h-[101px] shrink-0 border border-[#a8a8a8] pl-[6px] pt-[7px]">
              <span className="absolute -top-[6px] left-[6px] bg-[#f0f0f0] px-px">Line/column setup</span>
              <div className="flex">
                <div>
                  <div className="flex h-[16px] items-center pl-[15px]">
                    <div className="w-[32px] text-center">Num</div>
                    <div className="w-[46px] ml-[4px] text-center">space1</div>
                    <div className="w-[46px] ml-[4px] text-center">space2</div>
                    <div className="w-[46px] ml-[3px] flex justify-center overflow-hidden whitespace-nowrap">Dislocation</div>
                  </div>
                  {["X:", "Y:"].map((l) => (
                    <div key={l} className="flex h-[19px] mb-[2px] items-center">
                      <span className="w-[15px] pt-[3px] text-[12px]">{l}</span>
                      <div className={`${sunken} w-[32px] h-[19px] pl-[5px]`}>1</div>
                      <div className={`${sunken} w-[46px] h-[19px] ml-[4px] pl-[5px]`}>0.000</div>
                      <div className={`${sunken} w-[46px] h-[19px] ml-[4px] pl-[5px]`}>0.000</div>
                      <div className={`${sunken} w-[46px] h-[19px] ml-[3px] pl-[5px]`}>0.000</div>
                    </div>
                  ))}
                </div>
                <div className="ml-[3px]">
                  <div className="h-[16px] text-center flex items-center justify-center w-[62px]">Mirror</div>
                  <div className="w-[62px] h-[41px] border border-[#888] flex flex-col justify-around pl-[3px]">
                    {["m1", "m2"].map((m) => (
                      <div key={m} className="flex items-center">
                        <Chk />
                        <span className="ml-[5px] w-[13px]">H</span>
                        <Chk />
                        <span className="ml-[5px]">V</span>
                      </div>
                    ))}
                  </div>
                </div>
              </div>
              <div className="flex h-[27px] -ml-[5px] mt-[2px]">
                <div className="w-[30px] h-[29px] -mt-[1px] border-2 border-black flex items-center justify-center bg-[#f0f0f0]">
                  <svg width="22" height="22" viewBox="0 0 22 22" fill="none">
                    <path d="M2 1v19h19" stroke="#111" />
                    <path d="M8 5h4v4H8zM14 5h4v4h-4zM8 12h4v4H8zM14 12h4v4h-4z" stroke="#007a88" strokeWidth="1.3" />
                    <path d="M1 18h3v3H1z" fill="#0000d0" />
                  </svg>
                </div>
                <div className={`${bevel} w-[75px] h-[26px] ml-px`}>Virtual array</div>
                <div className={`${bevel} w-[68px] h-[26px] ml-[2px]`}>Bestrew...</div>
                <div className={`${bevel} w-[56px] h-[26px] ml-px`}>Nesting</div>
                <div className={`${bevel} w-[31px] h-[26px] ml-px`}>...</div>
              </div>
            </div>
            <div className="ml-[3px] mt-[9px] w-[288px] h-[2px] bg-[#909090]" />
          </div>
          <div className="flex-1 border-t border-[#a8a8a8] flex flex-col">
            <PanelGrip />
            <div className="relative ml-[5px] mt-[3px] w-[285px] h-[147px] shrink-0 border border-[#a8a8a8] pl-[7px] pt-[10px]">
              <span className="absolute -top-[5px] left-[6px] bg-[#f0f0f0] px-px">Laser work</span>
              {[["Start", "Pause/Continue", "Stop"], ["SaveToUFile", "UFileOutput", "Download"]].map((r) => (
                <div key={r[0]} className="flex h-[23px] mb-[2px]">
                  <div className={`${bevel} w-[92px]`}>{r[0]}</div>
                  <div className={`${bevel} w-[101px] ml-px`}>{r[1]}</div>
                  <div className={`${bevel} w-[72px] ml-px`}>{r[2]}</div>
                </div>
              ))}
              <div className="flex items-center h-[20px] mt-[3px]">
                <span className="ml-[50px] w-[46px] pt-[4px]">Position:</span>
                <Combo text="Current position" className="w-[171px] h-[19px]" />
              </div>
              <div className="flex mt-[13px]">
                <div className="w-[195px] flex flex-col">
                  <div className="flex items-center h-[15px]">
                    <Chk on />
                    <span className="ml-[4px]">Path optimize</span>
                  </div>
                  <div className="flex items-center h-[15px]">
                    <Chk on />
                    <span className="ml-[4px]">Output select graphics</span>
                  </div>
                  <div className="flex items-center h-[18px] ml-[17px]">
                    <Chk />
                    <span className="ml-[6px]">Selected graphics position</span>
                  </div>
                </div>
                <div className="flex flex-col -mt-[2px]">
                  <div className={`${bevel} w-[72px] h-[24px] mb-[1px]`}>Cut scale</div>
                  <div className={`${bevel} w-[72px] h-[24px]`}>Go scale</div>
                </div>
              </div>
            </div>
            <div className="relative ml-[5px] mt-[10px] w-[285px] h-[41px] shrink-0 border border-[#a8a8a8] pl-[6px] pt-[11px] flex">
              <span className="absolute -top-[6px] left-[6px] bg-[#f0f0f0] px-px">Device</span>
              <div className={`${bevel} w-[92px] h-[22px]`}>Setting</div>
              <Combo text="Device---(USB:Auto)" className="w-[171px] h-[20px] ml-[5px] mt-[2px]" />
            </div>
          </div>
        </div>
      </div>

      {/* palette */}
      <div className="h-[36px] shrink-0 flex items-center">
        <div className="w-[20px] shrink-0 flex flex-col items-center self-stretch pt-[6px] pl-[1px]">
          <span className="text-[12px] font-bold leading-[12px] -ml-[7px]">×</span>
          <div className="w-[3px] h-[9px] border-x border-[#a0a0a0] mt-[5px] -ml-[7px]" />
        </div>
        <div className="flex gap-[1.4px]">
          {palette.map((c) => (
            <div key={c} className="w-[24px] h-[25px] border border-[#a0a0a0]" style={{ backgroundColor: c }} />
          ))}
        </div>
      </div>

      {/* status */}
      <div className="h-[19px] shrink-0 flex text-[11px] border-t-2 border-[#a8a8a8]">
        <div className="w-[1252px] shrink-0 border border-[#c0c0c0] bg-[#f0f0f0]" />
        <div className="w-[21px] ml-[2px] shrink-0 border border-[#c0c0c0]" />
        <div className="w-[9px] ml-[2px] shrink-0 border border-[#c0c0c0]" />
        <div className="w-[200px] ml-[2px] shrink-0 border border-[#c0c0c0] flex items-center pl-[2px]">8 object,SizeX90.904,Y32.442</div>
        <div className="flex-1 ml-[3px] border border-[#c0c0c0] flex items-center pl-[2px]">X:816.978mm,Y:273.624mm</div>
      </div>

      {/* taskbar */}
      <div className="flex-1 bg-[#404040] flex items-stretch text-white text-[14px]">
        <div className="w-[48px] shrink-0 flex items-center justify-center">
          <svg width="17" height="17" viewBox="0 0 17 17">
            <path d="M0 2.4L7 1.4v6.6H0zM8 1.2L17 0v8H8zM0 9h7v6.6L0 14.6zM8 9h9v8l-9-1.2z" fill="#fff" />
          </svg>
        </div>
        <div className="w-[288px] shrink-0 bg-[#f2f2f2] border border-[#bdbdbd] text-[#222] flex items-center pl-[10px]">
          <Search size={20} strokeWidth={1.1} className="-scale-x-100" />
          <span className="ml-[9px]">Suchen</span>
        </div>
        <div className="w-[49px] shrink-0 flex items-center justify-center">
          <svg width="17" height="17" viewBox="0 0 17 17" fill="none" stroke="#fff">
            <path d="M.5 4.5h11v8H.5zM0 1.5h12M0 15.5h12M15 1v3M15 7v3M15 13v3" />
          </svg>
        </div>
        <div className="w-[40px] ml-[6px] mr-[4px] shrink-0 flex items-center justify-center border-b-[3px] border-[#76b9ed]">
          <svg width="22" height="22" viewBox="0 0 22 22">
            <path d="M1 2h8l2 2h10v3H1z" fill="#d9a520" />
            <path d="M1 6h20v14H1z" fill="#ffdf80" />
            <path d="M7 14h8v6h-2v-3H9v3H7z" fill="#2f80c8" />
          </svg>
        </div>
        <div className="w-[49px] shrink-0 flex items-center justify-center">
          <svg width="24" height="30" viewBox="0 0 22 26">
            <path d="M11 1l10 11-5 1 1 5-3-1-1 6-2-3-3 2 0-6-5-3z" fill="#111" stroke="#888" strokeWidth="0.4" />
            <path d="M11 4l4 5-3-1-1 2-2-2-2 1z" fill="#fff" />
            <circle cx="11" cy="13" r="1.5" fill="#3a5a90" />
          </svg>
        </div>
        <div className="w-[49px] shrink-0 flex items-center justify-center">
          <svg width="24" height="24" viewBox="0 0 24 24">
            <circle cx="12" cy="13" r="10" fill="#ff6a25" />
            <path d="M14 0c5 3 9 8 8 14l-7-3z" fill="#ffbd2e" />
            <circle cx="11" cy="13" r="5.5" fill="#7a3fd0" />
            <path d="M3 8c3-3 7-3 10-1l-6 4z" fill="#ff9a2e" />
          </svg>
        </div>
        <div className="w-[49px] shrink-0 flex items-center justify-center">
          <svg width="25" height="28" viewBox="0 0 25 28">
            <ellipse cx="12.5" cy="14" rx="12" ry="13.5" fill="#fff" />
            <ellipse cx="12.5" cy="14" rx="8.5" ry="10.5" fill="#3a3a3a" />
            <path d="M17 5c4 3 4 12 0 15-3 3-6 4-8 3z" fill="#ee7a30" />
          </svg>
        </div>
        <div className="w-[48px] shrink-0 flex items-center justify-center">
          <svg width="24" height="32" viewBox="0 0 24 32">
            <path d="M1 2l18-2 4 3v21H1z" fill="#f07f21" />
            <path d="M1 24h22v7H3z" fill="#7c3b10" />
            <text x="6" y="19" fontSize="17" fontWeight="700" fill="#fff" fontFamily="Liberation Sans">
              F
            </text>
            <text x="7" y="30" fontSize="6" fontWeight="700" fill="#f5c08a" fontFamily="Liberation Sans">
              360
            </text>
          </svg>
        </div>
        <div className="w-[48px] shrink-0 bg-[#6a6a6a] flex items-center justify-center border-b-[3px] border-[#76b9ed]">
          <div className="w-[24px] h-[26px] bg-white flex flex-col items-center justify-center">
            <svg width="20" height="10" viewBox="0 0 20 10" fill="none" stroke="#666">
              <path d="M1 1l4 8 2-7 2 7 2-7 2 7 2-7 4-1" />
            </svg>
            <span className="text-[5px] font-bold text-[#444] mt-[2px]">LOTUS</span>
          </div>
        </div>
        <div className="flex-1 flex items-center justify-end">
          <svg width="18" height="24" viewBox="0 0 18 24" className="mr-[11px]">
            <path d="M1 9c2 1 3 1 4 2 1-2 2-3 4-3s3 1 4 3c1-1 2-1 4-2 1 5-1 9-4 10l-3 0v4H8v-4l-3 0c-3-1-5-5-4-10z" fill="#e84a3c" />
            <path d="M4 4h2v2H4zM8 2h2v2H8zM12 4h2v2h-2zM8 6h2v1H8z" fill="#e84a3c" />
          </svg>
          <span className="mr-[21px] w-[139px] whitespace-nowrap">Sehr starker Pollenflug</span>
          <ChevronUp size={20} strokeWidth={1.2} className="mr-[7px]" />
          <svg width="14" height="18" viewBox="0 0 14 18" fill="none" stroke="#fff" className="mr-[10px]">
            <path d="M3 2c2-1.5 6-1.5 8 0M3 16c2 1.5 6 1.5 8 0M1 5h8v8H1zM9 8l4-2v6l-4-2" />
          </svg>
          <svg width="17" height="16" viewBox="0 0 17 16" fill="none" stroke="#fff" className="mr-[6px]">
            <path d="M4.5 2.5h12v9h-12zM10.5 11.5v3M7 14.5h7M.5.5h5v6h-5z" />
          </svg>
          <Volume2 size={18} strokeWidth={1.1} className="mr-[5px]" />
          <div className="w-[62px] flex flex-col items-center gap-[6px] text-[11.5px] text-[#e8e8e8]">
            <span>11:53</span>
            <span>21.03.2024</span>
          </div>
          <MessageSquare size={20} strokeWidth={1.2} className="ml-[12px] mr-[23px] -scale-x-100" />
        </div>
      </div>
    </div>
  );
}
